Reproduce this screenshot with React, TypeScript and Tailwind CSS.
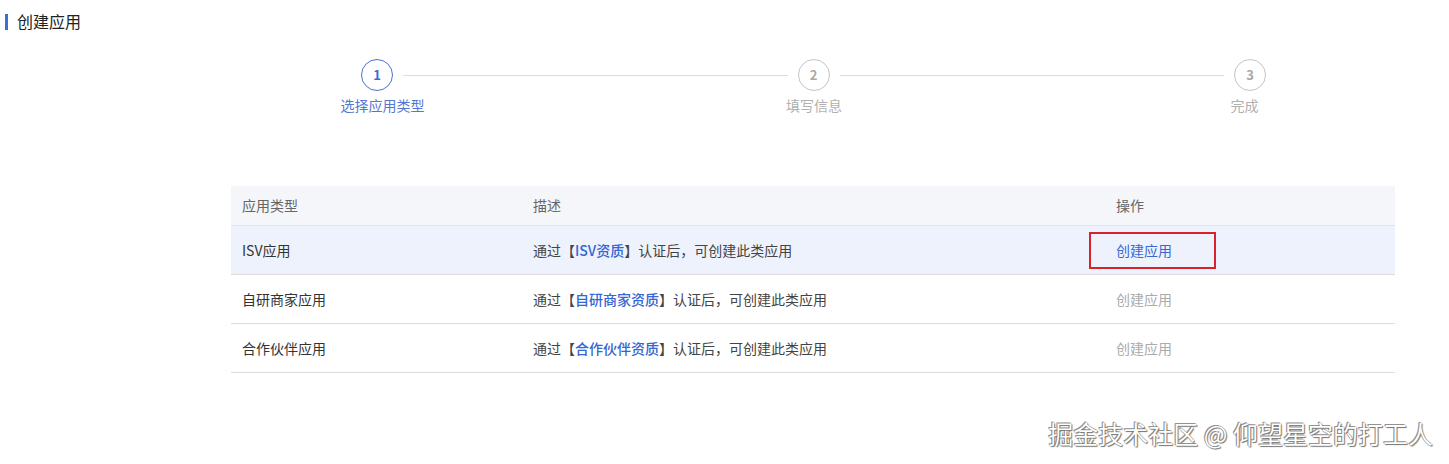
import React from "react";

type Step = { no: number; label: string; active?: boolean; shift: string };

const steps: Step[] = [
  { no: 1, label: "选择应用类型", active: true, shift: "ml-[11px]" },
  { no: 2, label: "填写信息", shift: "ml-[1px]" },
  { no: 3, label: "完成", shift: "mr-[11px]" },
];

type Row = { type: string; cert: string; enabled?: boolean };

const rows: Row[] = [
  { type: "ISV应用", cert: "ISV资质", enabled: true },
  { type: "自研商家应用", cert: "自研商家资质" },
  { type: "合作伙伴应用", cert: "合作伙伴资质" },
];

const StepItem: React.FC<{ step: Step }> = ({ step }) => (
  <div className="flex w-[100px] flex-col items-center">
    <div
      className={
        step.active
          ? "flex h-[32px] w-[32px] items-center justify-center rounded-full border border-[#4a72d6] text-[13px] font-bold text-[#3f69cf]"
          : "flex h-[32px] w-[32px] items-center justify-center rounded-full border border-[#c4c4c4] text-[13px] font-bold text-[#a8a8a8]"
      }
    >
      {step.no}
    </div>
    <div
      className={
        (step.active
          ? "mt-[6px] whitespace-nowrap text-[14px] leading-[16px] text-[#5577d2] "
          : "mt-[6px] whitespace-nowrap text-[14px] leading-[16px] text-[#b0b0b0] ") + step.shift
      }
    >
      {step.label}
    </div>
  </div>
);

export default function App() {
  return (
    <div
      className="relative h-[464px] w-full bg-white text-[#333]"
      style={{ fontFamily: '"Microsoft YaHei", "Noto Sans CJK SC", "Noto Sans", sans-serif' }}
    >
      {/* title */}
      <div className="flex items-center pl-[5px] pt-[12px]">
        <span className="h-[16px] w-[3px] bg-[#3b6fd8]" />
        <span className="ml-[9px] text-[16px] leading-[19px] text-[#222]">创建应用</span>
      </div>

      {/* steps */}
      <div className="ml-[327px] mt-[28px] flex w-[973px] items-start">
        {steps.map((s, i) => (
          <React.Fragment key={s.no}>
            <StepItem step={s} />
            {i < steps.length - 1 && (
              <div className="-mx-[24px] mt-[15.5px] h-px flex-1 bg-[#dcdcdc]" />
            )}
          </React.Fragment>
        ))}
      </div>

      {/* table */}
      <div className="ml-[231px] mt-[73px] w-[1164px] text-[14px]">
        <div className="flex h-[40px] items-center border-b border-[#dfe2e6] bg-[#f4f6f9] text-[#666]">
          <div className="w-[291px] pl-[11px]">应用类型</div>
          <div className="w-[583px] pl-[11px]">描述</div>
          <div className="flex-1 pl-[11px]">操作</div>
        </div>
        {rows.map((r) => (
          <div
            key={r.type}
            className={
              r.enabled
                ? "flex h-[49px] items-center border-b border-[#dcdcdc] bg-[#eef2fc]"
                : "flex h-[49px] items-center border-b border-[#dcdcdc] bg-white"
            }
          >
            <div className="w-[291px] pl-[11px] text-[#333]">{r.type}</div>
            <div className="w-[583px] pl-[11px] text-[#444]">
              通过【<span className="font-medium text-[#3466d4]">{r.cert}</span>】认证后，可创建此类应用
            </div>
            <div className="flex-1 pl-[11px]">
              {r.enabled ? (
                <span className="relative text-[#3a68d2]">
                  创建应用
                  <span className="pointer-events-none absolute left-[-27px] top-[-8px] h-[37px] w-[127px] border-2 border-[#d9232c]" />
                </span>
              ) : (
                <span className="text-[#ababab]">创建应用</span>
              )}
            </div>
          </div>
        ))}
      </div>

      {/* watermark */}
      <div
        className="absolute right-[16px] top-[418px] whitespace-nowrap text-[25px] leading-[30px] text-white"
        style={{ textShadow: "0 0 1px #555, 1px 1px 1px #777, -1px -1px 0 #999" }}
      >
        掘金技术社区 @ 仰望星空的打工人
      </div>
    </div>
  );
}
